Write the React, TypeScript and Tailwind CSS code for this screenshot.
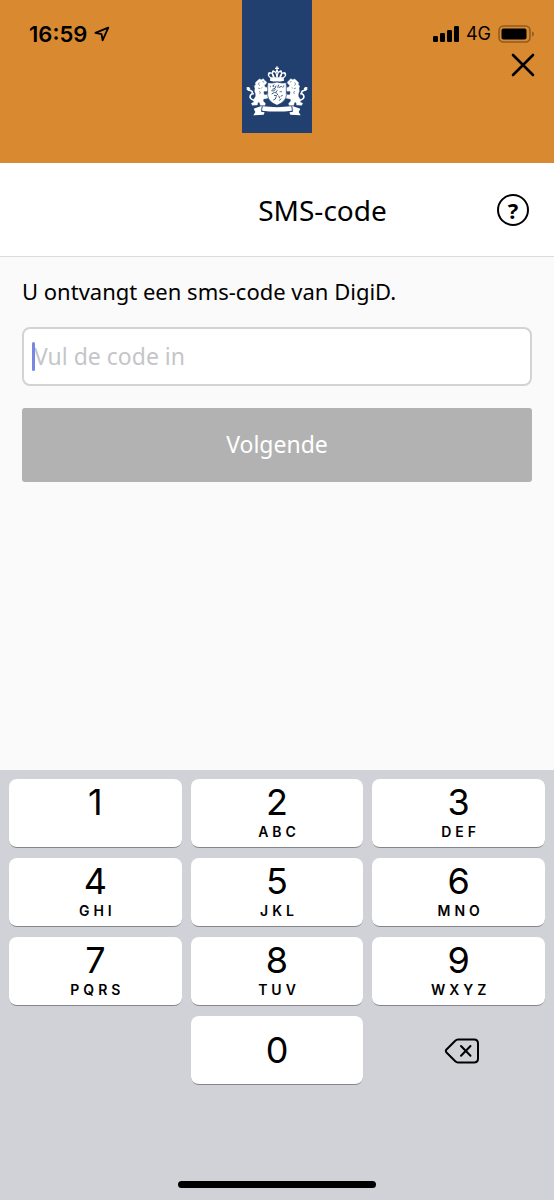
import { useState } from 'react'
import clsx from 'clsx'

const KEYS = [
    { digit: '1', letters: '' },
    { digit: '2', letters: 'ABC' },
    { digit: '3', letters: 'DEF' },
    { digit: '4', letters: 'GHI' },
    { digit: '5', letters: 'JKL' },
    { digit: '6', letters: 'MNO' },
    { digit: '7', letters: 'PQRS' },
    { digit: '8', letters: 'TUV' },
    { digit: '9', letters: 'WXYZ' },
]

// One half of the coat of arms, the other half is this one mirrored
const Lion = () => (
    <g>
        <path
            d="M82 92 L88 87 L94 89 L100 86 L105 92 L110 96 L108 102 L103 105 L105 111 L112 113 L113 107 L118 108 L118 120 L109 124 L102 123 L101 128 L102 134 L110 135 L112 130 L118 133 L117 143 L106 146 L102 146 L99 150 L101 155 L106 160 L105 166 L91 166 L89 158 L86 156 L83 159 L82 165 L67 166 L64 160 L71 157 L72 147 L77 139 L77 132 L74 124 L75 115 L73 108 L77 104 L76 98 Z"
            fill="#fff"
            stroke="#fff"
            strokeWidth="1"
        />
        <path
            d="M74 151 C63 149 58 143 61 137 C64 131 69 133 67 126 C65 120 59 123 52 117"
            fill="none"
            stroke="#fff"
            strokeWidth="5"
            strokeLinecap="round"
        />
        <path d="M49 112 l8 -1 l4 5 l-5 7 z M65 131 l7 -3 l-2 8 z" fill="#fff" />
        <path
            d="M97 95 l5 1 M88 97 l-3 6 l5 4 M84 114 l6 2 M87 123 l4 3 l-2 6 M96 112 l-3 4"
            fill="none"
            stroke="#21406f"
            strokeWidth="1.6"
        />
    </g>
)

const CoatOfArms = () => (
    <svg viewBox="48 48 186 153" className="w-[62px] h-[51px]" role="img" aria-label="Rijksoverheid">
        <g fill="#fff">
            <path d="M139 49 h4 v4 h4 v4 h-4 v5 h-4 v-5 h-4 v-4 h4 z" />
            <circle cx="118" cy="70" r="3.5" />
            <circle cx="130" cy="64" r="3.5" />
            <circle cx="141" cy="64" r="4" />
            <circle cx="152" cy="64" r="3.5" />
            <circle cx="164" cy="70" r="3.5" />
            <path d="M121 82 h40 l1 10 q-21 5 -42 0 z" />
        </g>
        <g fill="none" stroke="#fff" strokeWidth="3.6">
            <path d="M123 84 Q110 75 118 69 Q128 65 133 83" />
            <path d="M131 83 Q123 68 130 64 Q139 63 141 82" />
            <path d="M151 83 Q159 68 152 64 Q143 63 141 82" />
            <path d="M159 84 Q172 75 164 69 Q154 65 149 83" />
        </g>

        <Lion />
        <g transform="translate(282 0) scale(-1 1)">
            <Lion />
        </g>

        <path
            d="M113 98 Q128 101 141 96 Q154 101 169 98 V137 Q167 155 141 166 Q115 155 113 137 Z"
            fill="#fff"
            stroke="#21406f"
            strokeWidth="2"
        />
        <g fill="none" stroke="#21406f" strokeWidth="2.6">
            <path d="M133 104 l-5 4 l5 2 M138 107 l-3 8 l-8 3 M137 117 l-6 6 l-7 -1 M146 104 l-3 9 M146 113 l8 -4 l4 3" />
            <path d="M125 132 l9 -5 l8 3 M138 126 l4 -5 M144 132 l-5 5 l-7 -1 M139 139 l-3 8 l-6 3 M146 137 l3 8 M152 139 l6 -3 M153 146 l-5 6" />
            <path d="M149 125 h7 M161 106 v6 M121 107 v5" strokeWidth="2" />
        </g>

        <g fill="#fff">
            <path d="M98 169 Q141 174 184 169 L186 182 Q141 187 96 182 Z" />
            <path d="M71 176 L95 168 L96 173 L93 185 L104 187 L101 194 L70 196 L76 186 Z" />
            <path d="M211 176 L187 168 L186 173 L189 185 L178 187 L181 194 L212 196 L206 186 Z" />
        </g>
        <path
            d="M95 171 Q92 181 97 184 L106 186 M187 171 Q190 181 185 184 L176 186"
            fill="none"
            stroke="#21406f"
            strokeWidth="1.6"
        />
    </svg>
)

const StatusIcons = () => (
    <div className="flex items-center gap-[7px] h-6">
        <svg viewBox="0 0 26 16" className="w-[26px] h-4" aria-hidden="true">
            <rect x="0" y="10" width="5" height="6" rx="1.3" />
            <rect x="7" y="7" width="5" height="9" rx="1.3" />
            <rect x="14" y="4" width="5" height="12" rx="1.3" />
            <rect x="21" y="0" width="5" height="16" rx="1.3" />
        </svg>
        <span className="text-[18px] leading-6">4G</span>
        <svg viewBox="0 0 37 18" className="w-[37px] h-[18px]" aria-hidden="true">
            <rect x="1" y="1" width="31" height="16" rx="4.5" fill="none" stroke="#8f5b20" strokeWidth="1.6" />
            <rect x="3.5" y="3.5" width="25" height="11" rx="2" />
            <path d="M34 6.5 Q36 7 36 9 Q36 11 34 11.5 Z" fill="#8f5b20" />
        </svg>
    </div>
)

export default function App() {
    const [code, setCode] = useState('')

    return (
        <div className="flex flex-col min-h-screen bg-[#fafafa] text-black font-['Noto_Sans',sans-serif]">
            <header className="grid grid-cols-[1fr_70px_1fr] pb-[30px] bg-[#d98a30] font-['Inter',sans-serif]">
                <div className="flex items-center gap-[7px] h-6 mt-[22px] pl-[29px]">
                    <span className="text-[22px] leading-6 font-semibold">16:59</span>
                    <svg viewBox="0 0 16 16" className="w-4 h-4" aria-hidden="true">
                        <path
                            d="M14.3 1.6 L1.4 6.9 L7.6 8.2 L8.6 14.3 Z"
                            fill="none"
                            stroke="#000"
                            strokeWidth="1.8"
                            strokeLinejoin="round"
                        />
                    </svg>
                </div>
                <div className="flex items-end justify-center h-[133px] pb-4 bg-[#21406f]">
                    <CoatOfArms />
                </div>
                <div className="flex flex-col items-end gap-[7px] pt-[22px] pr-[19px]">
                    <StatusIcons />
                    <button aria-label="Sluiten" className="cursor-pointer">
                        <svg viewBox="0 0 24 24" className="w-6 h-6">
                            <path
                                d="M2 2 L22 22 M22 2 L2 22"
                                stroke="#000"
                                strokeWidth="2.6"
                                strokeLinecap="round"
                            />
                        </svg>
                    </button>
                </div>
            </header>

            <div className="flex items-center h-[94px] pl-[148px] pr-[25px] bg-white border-b border-[#dcdcdc]">
                <h1 className="flex-1 text-center text-[28px] leading-9">SMS-code</h1>
                <button
                    aria-label="Help"
                    className="flex items-center justify-center w-8 h-8 rounded-full border-2 border-black text-[22px] leading-6 font-bold cursor-pointer"
                >
                    ?
                </button>
            </div>

            <main className="flex-1 flex flex-col px-[22px] pt-[18px]">
                <label htmlFor="code" className="text-[22px] leading-8">
                    U ontvangt een sms-code van DigiD.
                </label>
                <div className="relative mt-5">
                    <input
                        id="code"
                        inputMode="numeric"
                        placeholder="Vul de code in"
                        value={code}
                        onChange={(e) => setCode(e.target.value)}
                        className="block w-full h-[59px] pl-[10px] pr-3 pb-[2px] rounded-lg border-2 border-[#d3d3d5] bg-white text-[23px] placeholder:text-[#c5c5c9] outline-none"
                    />
                    {code === '' && (
                        <span className="absolute left-[10px] top-[15px] w-[3px] h-[29px] rounded-full bg-[#7688e2]" />
                    )}
                </div>
                <button
                    disabled={code === ''}
                    className={clsx(
                        'h-[74px] mt-[22px] pb-[2px] rounded-[3px] text-[23px] text-white',
                        code === '' ? 'bg-[#b2b2b2]' : 'bg-[#d98a30]'
                    )}
                >
                    Volgende
                </button>
            </main>

            <div className="flex flex-col items-center px-[9px] pt-[9px] pb-3 bg-[#d1d2d8] font-['Inter',sans-serif]">
                <div className="grid grid-cols-3 auto-rows-[69px] gap-x-[9px] gap-y-[10px] w-full">
                    {KEYS.map(({ digit, letters }) => (
                        <button
                            key={digit}
                            onClick={() => setCode((c) => c + digit)}
                            className="flex flex-col items-center gap-1 pt-[5px] rounded-lg border-b border-[#85868a] bg-white"
                        >
                            <span className="text-[36px] leading-9">{digit}</span>
                            <span className="pl-1 text-[14px] leading-4 font-semibold tracking-[4px]">{letters}</span>
                        </button>
                    ))}
                    <button
                        onClick={() => setCode((c) => c + '0')}
                        className="col-start-2 rounded-lg border-b border-[#85868a] bg-white text-[36px] leading-9"
                    >
                        0
                    </button>
                    <button
                        aria-label="Wissen"
                        onClick={() => setCode((c) => c.slice(0, -1))}
                        className="flex items-center justify-center pl-[6px]"
                    >
                        <svg
                            viewBox="0 0 36 26"
                            className="w-9 h-[26px]"
                            fill="none"
                            stroke="#000"
                            strokeWidth="2"
                            strokeLinecap="round"
                            strokeLinejoin="round"
                        >
                            <path d="M14 1.5 H30 Q34 1.5 34 5.5 V20.5 Q34 24.5 30 24.5 H14 Q12.5 24.5 11 23 L2.5 14.5 Q1.2 13 2.5 11.5 L11 3 Q12.5 1.5 14 1.5 Z" />
                            <path d="M17 8 L26.5 17.8 M26.5 8 L17 17.8" />
                        </svg>
                    </button>
                </div>
                <div className="w-[198px] h-[7px] mt-24 rounded-full bg-black" />
            </div>
        </div>
    )
}
